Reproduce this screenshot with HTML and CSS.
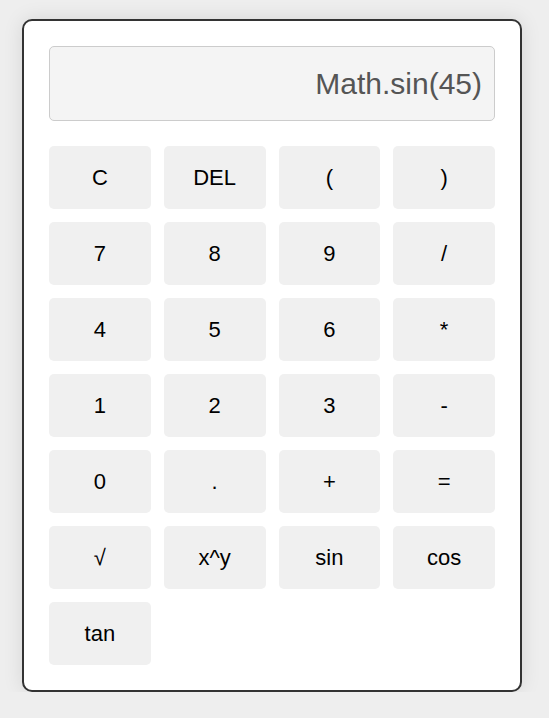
FILE: index.html
```html
<!DOCTYPE html>
<html>
<head>
<meta charset="utf-8">
<link rel="stylesheet" href="styles.css">
</head>
<body>
<div class="calculator">
  <div class="display">Math.sin(45)</div>
  <div class="keys">
    <button class="key">C</button>
    <button class="key">DEL</button>
    <button class="key">(</button>
    <button class="key">)</button>
    <button class="key">7</button>
    <button class="key">8</button>
    <button class="key">9</button>
    <button class="key">/</button>
    <button class="key">4</button>
    <button class="key">5</button>
    <button class="key">6</button>
    <button class="key">*</button>
    <button class="key">1</button>
    <button class="key">2</button>
    <button class="key">3</button>
    <button class="key">-</button>
    <button class="key">0</button>
    <button class="key">.</button>
    <button class="key">+</button>
    <button class="key">=</button>
    <button class="key">√</button>
    <button class="key">x^y</button>
    <button class="key">sin</button>
    <button class="key">cos</button>
    <button class="key">tan</button>
  </div>
</div>
</body>
</html>
```
FILE: styles.css
```css
html, body {
  margin: 0;
  padding: 0;
}
body {
  background: #eeeeee;
  font-family: "Liberation Sans", Arial, sans-serif;
  padding: 19px 0 0 22px;
}
.calculator {
  width: 446px;
  padding: 25px;
  background: #ffffff;
  border: 2px solid #333333;
  border-radius: 10px;
  box-shadow: 0 0 20px rgba(0, 0, 0, 0.1);
}
.display {
  box-sizing: border-box;
  height: 75px;
  padding: 0 12px;
  background: #f4f4f4;
  border: 1px solid #cccccc;
  border-radius: 5px;
  color: #555555;
  font-size: 30px;
  display: flex;
  align-items: center;
  justify-content: flex-end;
  margin-bottom: 25px;
}
.keys {
  display: grid;
  grid-template-columns: repeat(4, 1fr);
  column-gap: 13px;
  row-gap: 13px;
  grid-auto-rows: 63px;
}
.key {
  border: none;
  background: #f0f0f0;
  border-radius: 5px;
  font-family: "Liberation Sans", Arial, sans-serif;
  font-size: 22px;
  color: #000000;
  padding: 0;
}
```
